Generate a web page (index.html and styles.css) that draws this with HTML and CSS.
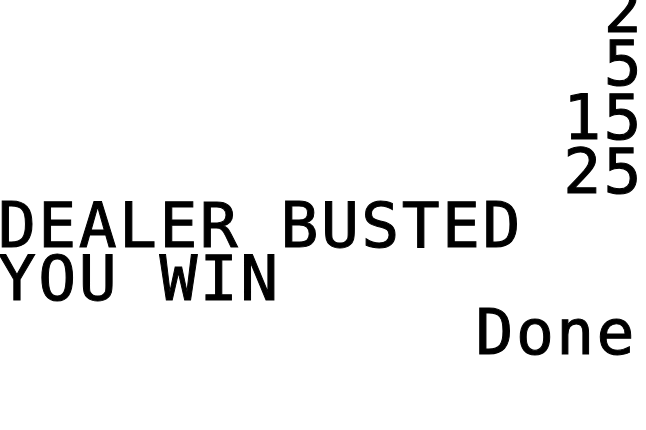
FILE: index.html
```html
<!DOCTYPE html>
<html>
<head>
<meta charset="utf-8">
<title>Home screen</title>
<link rel="stylesheet" href="styles.css">
</head>
<body>
<div class="screen">
  <div class="line right">2</div>
  <div class="line right">5</div>
  <div class="line right">15</div>
  <div class="line right">25</div>
  <div class="line">DEALER BUSTED</div>
  <div class="line">YOU WIN</div>
  <div class="line right done">Done</div>
</div>
</body>
</html>
```
FILE: styles.css
```css
html, body {
  margin: 0;
  padding: 0;
  background: #ffffff;
  overflow: hidden;
}
body {
  width: 646px;
  height: 430px;
}
.screen {
  width: 646px;
  margin: -16.5px 0 0 -2px;
  font-family: "DejaVu Sans Mono", "Liberation Mono", monospace;
  font-size: 63px;
  letter-spacing: 2.44px;
  line-height: 53.75px;
  color: #000000;
  -webkit-text-stroke: 1px #000000;
}
.line {
  height: 53.75px;
  white-space: pre;
}
.right {
  text-align: right;
}
.done {
  padding-right: 7px;
}
```
